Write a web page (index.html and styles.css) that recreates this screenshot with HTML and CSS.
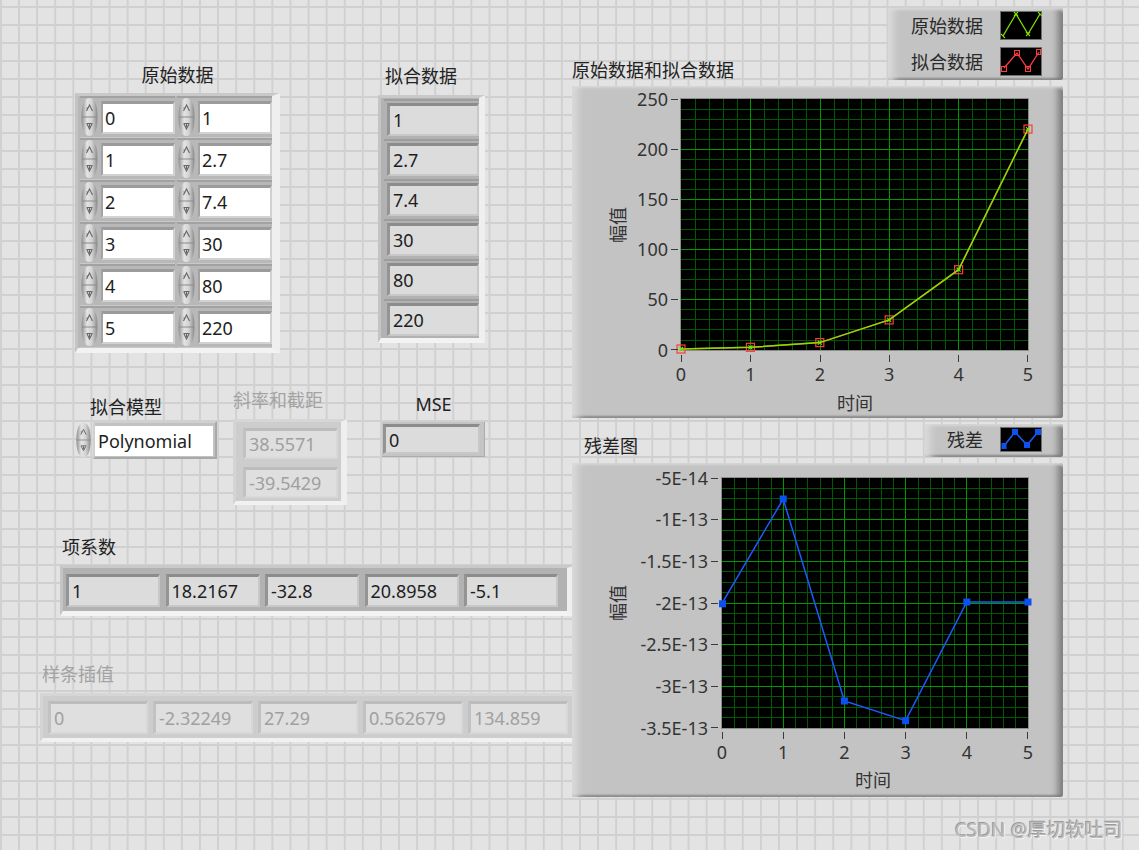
FILE: index.html
```html
<!DOCTYPE html>
<html lang="zh-CN">
<head>
<meta charset="utf-8">
<title>多项式拟合 前面板</title>
<link rel="stylesheet" href="styles.css">
</head>
<body>
<svg class="defs" width="0" height="0" aria-hidden="true">
  <defs>
    <linearGradient id="spin-grad" x1="0" y1="0" x2="1" y2="0">
      <stop offset="0" stop-color="#8f8f8f"/>
      <stop offset="0.35" stop-color="#e4e4e4"/>
      <stop offset="0.65" stop-color="#d2d2d2"/>
      <stop offset="1" stop-color="#8a8a8a"/>
    </linearGradient>
    <symbol id="spin" viewBox="0 0 19 40">
      <path d="M1.5 20 C1.5 7 4.5 1 9.5 1 C14.5 1 17.5 7 17.5 20 Z" fill="url(#spin-grad)"/>
      <path d="M1.5 20 C1.5 33 4.5 39 9.5 39 C14.5 39 17.5 33 17.5 20 Z" fill="url(#spin-grad)"/>
      <path d="M2 20 H17" stroke="#8a8a8a" stroke-width="1"/>
      <path d="M6.5 14 L9.5 8 L12.5 14 M8 11 H6.5" stroke="#666" stroke-width="1.1" fill="none"/>
      <path d="M6.5 26.5 H12.5 M7 27 L9.5 32 L12 27 M9.5 27 V30" stroke="#666" stroke-width="1.1" fill="none"/>
    </symbol>
  </defs>
</svg>

<main class="panel">

  <section class="ctl raw">
    <h2 class="lbl lbl-c">原始数据</h2>
    <div class="arr arr-raw">
      <div class="num"><svg class="spin"><use href="#spin"/></svg><span class="in">0</span></div>
      <div class="num"><svg class="spin"><use href="#spin"/></svg><span class="in">1</span></div>
      <div class="num"><svg class="spin"><use href="#spin"/></svg><span class="in">1</span></div>
      <div class="num"><svg class="spin"><use href="#spin"/></svg><span class="in">2.7</span></div>
      <div class="num"><svg class="spin"><use href="#spin"/></svg><span class="in">2</span></div>
      <div class="num"><svg class="spin"><use href="#spin"/></svg><span class="in">7.4</span></div>
      <div class="num"><svg class="spin"><use href="#spin"/></svg><span class="in">3</span></div>
      <div class="num"><svg class="spin"><use href="#spin"/></svg><span class="in">30</span></div>
      <div class="num"><svg class="spin"><use href="#spin"/></svg><span class="in">4</span></div>
      <div class="num"><svg class="spin"><use href="#spin"/></svg><span class="in">80</span></div>
      <div class="num"><svg class="spin"><use href="#spin"/></svg><span class="in">5</span></div>
      <div class="num"><svg class="spin"><use href="#spin"/></svg><span class="in">220</span></div>
    </div>
  </section>

  <section class="ctl fit">
    <h2 class="lbl">拟合数据</h2>
    <div class="arr arr-fit">
      <div class="el"><span class="ind">1</span></div>
      <div class="el"><span class="ind">2.7</span></div>
      <div class="el"><span class="ind">7.4</span></div>
      <div class="el"><span class="ind">30</span></div>
      <div class="el"><span class="ind">80</span></div>
      <div class="el"><span class="ind">220</span></div>
    </div>
  </section>

  <section class="ctl model">
    <h2 class="lbl">拟合模型</h2>
    <div class="ring">
      <svg class="spin"><use href="#spin"/></svg>
      <div class="ring-box"><div class="ring-val">Polynomial</div></div>
    </div>
  </section>

  <section class="ctl slope dis">
    <h2 class="lbl lbl-dis">斜率和截距</h2>
    <div class="arr arr-slope">
      <span class="ind">38.5571</span>
      <span class="ind">-39.5429</span>
    </div>
  </section>

  <section class="ctl mse">
    <h2 class="lbl lbl-c">MSE</h2>
    <div class="ind-frame"><span class="ind">0</span></div>
  </section>

  <section class="ctl coef">
    <h2 class="lbl">项系数</h2>
    <div class="arr arr-h arr-coef">
      <span class="ind">1</span>
      <span class="ind">18.2167</span>
      <span class="ind">-32.8</span>
      <span class="ind">20.8958</span>
      <span class="ind">-5.1</span>
    </div>
  </section>

  <section class="ctl spline dis">
    <h2 class="lbl lbl-dis">样条插值</h2>
    <div class="arr arr-h arr-spline">
      <span class="ind">0</span>
      <span class="ind">-2.32249</span>
      <span class="ind">27.29</span>
      <span class="ind">0.562679</span>
      <span class="ind">134.859</span>
    </div>
  </section>

  <section class="ctl g1">
    <h2 class="lbl">原始数据和拟合数据</h2>
    <div class="frame gframe">
      <svg class="plot" width="491" height="332" viewBox="0 0 491 332">
        <rect x="109" y="13" width="347" height="251" fill="#000"/>
        <path class="minor" d="M123.5 13V264M137.5 13V264M151.5 13V264M165.5 13V264M192.5 13V264M206.5 13V264M220.5 13V264M234.5 13V264M262.5 13V264M276.5 13V264M289.5 13V264M303.5 13V264M331.5 13V264M345.5 13V264M359.5 13V264M373.5 13V264M400.5 13V264M414.5 13V264M428.5 13V264M442.5 13V264M109 254.5H456M109 243.5H456M109 233.5H456M109 223.5H456M109 203.5H456M109 193.5H456M109 183.5H456M109 173.5H456M109 153.5H456M109 143.5H456M109 133.5H456M109 123.5H456M109 103.5H456M109 93.5H456M109 83.5H456M109 73.5H456M109 53.5H456M109 43.5H456M109 33.5H456M109 23.5H456"/>
        <path class="major" d="M178.5 13V264M248.5 13V264M317.5 13V264M386.5 13V264M109 213.5H456M109 163.5H456M109 113.5H456M109 63.5H456"/>
        <rect class="pborder" x="108.5" y="12.5" width="348" height="252"/>
        <polyline class="fitline" points="109,263 178.4,261.3 247.8,256.6 317.2,233.9 386.6,183.7 456,43.1"/>
        <g class="fitmk">
          <rect x="105" y="259" width="8" height="8"/>
          <rect x="174.4" y="257.3" width="8" height="8"/>
          <rect x="243.8" y="252.6" width="8" height="8"/>
          <rect x="313.2" y="229.9" width="8" height="8"/>
          <rect x="382.6" y="179.7" width="8" height="8"/>
          <rect x="452" y="39.1" width="8" height="8"/>
        </g>
        <polyline class="rawline" points="109,263 178.4,261.3 247.8,256.6 317.2,233.9 386.6,183.7 456,43.1"/>
        <path class="rawmk" d="M107 261l4 4m0-4l-4 4M176.4 259.3l4 4m0-4l-4 4M245.8 254.6l4 4m0-4l-4 4M315.2 231.9l4 4m0-4l-4 4M384.6 181.7l4 4m0-4l-4 4M454 41.1l4 4m0-4l-4 4"/>
        <path class="tick" d="M99 263.5H106M99 213.5H106M99 163.5H106M99 113.5H106M99 63.5H106M99 13.5H106M109.5 269V276M178.5 269V276M248.5 269V276M317.5 269V276M386.5 269V276M455.5 269V276"/>
        <g class="axis ya">
          <text x="96" y="270.5">0</text>
          <text x="96" y="220.3">50</text>
          <text x="96" y="170.1">100</text>
          <text x="96" y="119.9">150</text>
          <text x="96" y="69.7">200</text>
          <text x="96" y="19.5">250</text>
        </g>
        <g class="axis xa">
          <text x="109" y="294.5">0</text>
          <text x="178.4" y="294.5">1</text>
          <text x="247.8" y="294.5">2</text>
          <text x="317.2" y="294.5">3</text>
          <text x="386.6" y="294.5">4</text>
          <text x="456" y="294.5">5</text>
          <text x="283" y="324">时间</text>
          <text transform="translate(46 139) rotate(-90)" y="6.8">幅值</text>
        </g>
      </svg>
    </div>
  </section>

  <aside class="ctl frame legend leg1">
    <div class="leg-row">
      <span>原始数据</span>
      <svg class="swatch" viewBox="0 0 42 29">
        <rect x="0.5" y="0.5" width="41" height="28" fill="#000" stroke="#6e6e6e"/>
        <polyline points="3,25 16,3 28,23 40,3" fill="none" stroke="#7fdc00" stroke-width="1.3"/>
        <path d="M14 1l4 4m0-4l-4 4M26 21l4 4m0-4l-4 4M1 23l4 4M38 1l4 4" stroke="#7fdc00" stroke-width="1.1"/>
      </svg>
    </div>
    <div class="leg-row">
      <span>拟合数据</span>
      <svg class="swatch" viewBox="0 0 42 29">
        <rect x="0.5" y="0.5" width="41" height="28" fill="#000" stroke="#6e6e6e"/>
        <polyline points="4,21 17,6 28,22 39,5" fill="none" stroke="#ff3b3b" stroke-width="1.3"/>
        <g fill="none" stroke="#ff3b3b" stroke-width="1">
          <rect x="1.5" y="19.5" width="5" height="5"/>
          <rect x="14.5" y="3.5" width="5" height="5"/>
          <rect x="25.5" y="19.5" width="5" height="5"/>
          <rect x="36.5" y="2.5" width="4" height="5"/>
        </g>
      </svg>
    </div>
  </aside>

  <section class="ctl g2">
    <h2 class="lbl">残差图</h2>
    <div class="frame gframe">
      <svg class="plot" width="491" height="334" viewBox="0 0 491 334">
        <rect x="150" y="15" width="306" height="250" fill="#000"/>
        <path class="minor" d="M162.5 15V265M174.5 15V265M186.5 15V265M199.5 15V265M223.5 15V265M235.5 15V265M248.5 15V265M260.5 15V265M284.5 15V265M297.5 15V265M309.5 15V265M321.5 15V265M346.5 15V265M358.5 15V265M370.5 15V265M382.5 15V265M407.5 15V265M419.5 15V265M431.5 15V265M443.5 15V265M150 25.5H456M150 35.5H456M150 46.5H456M150 67.5H456M150 77.5H456M150 87.5H456M150 108.5H456M150 119.5H456M150 129.5H456M150 150.5H456M150 160.5H456M150 171.5H456M150 192.5H456M150 202.5H456M150 213.5H456M150 233.5H456M150 244.5H456M150 254.5H456"/>
        <path class="major" d="M211.5 15V265M272.5 15V265M333.5 15V265M394.5 15V265M150 56.5H456M150 98.5H456M150 140.5H456M150 181.5H456M150 223.5H456"/>
        <rect class="pborder" x="149.5" y="14.5" width="307" height="251"/>
        <polyline class="resline" points="150,140.3 211.2,36 272.4,238 333.6,257.7 394.8,139 456,139"/>
        <g class="resmk">
          <rect x="147" y="137.3" width="7" height="7"/>
          <rect x="207.7" y="32.5" width="7" height="7"/>
          <rect x="268.9" y="234.5" width="7" height="7"/>
          <rect x="330.1" y="254.2" width="7" height="7"/>
          <rect x="391.3" y="135.5" width="7" height="7"/>
          <rect x="452.5" y="135.5" width="7" height="7"/>
        </g>
        <path class="tick" d="M139 15.5H146M139 56.5H146M139 98.5H146M139 140.5H146M139 181.5H146M139 223.5H146M139 264.5H146M150.5 269V276M211.5 269V276M272.5 269V276M333.5 269V276M394.5 269V276M455.5 269V276"/>
        <g class="axis ya">
          <text x="136" y="21.5">-5E-14</text>
          <text x="136" y="63.2">-1E-13</text>
          <text x="136" y="104.8">-1.5E-13</text>
          <text x="136" y="146.5">-2E-13</text>
          <text x="136" y="188.2">-2.5E-13</text>
          <text x="136" y="229.8">-3E-13</text>
          <text x="136" y="271.5">-3.5E-13</text>
        </g>
        <g class="axis xa">
          <text x="150" y="295.5">0</text>
          <text x="211.2" y="295.5">1</text>
          <text x="272.4" y="295.5">2</text>
          <text x="333.6" y="295.5">3</text>
          <text x="394.8" y="295.5">4</text>
          <text x="456" y="295.5">5</text>
          <text x="301" y="324">时间</text>
          <text transform="translate(46 140) rotate(-90)" y="6.8">幅值</text>
        </g>
      </svg>
    </div>
  </section>

  <aside class="ctl frame legend leg2">
    <div class="leg-row">
      <span>残差</span>
      <svg class="swatch sw-sm" viewBox="0 0 42 25">
        <rect x="0.5" y="0.5" width="41" height="24" fill="#000" stroke="#6e6e6e"/>
        <polyline points="4,19 15,5 27,18 38,5" fill="none" stroke="#1a5cff" stroke-width="1.5"/>
        <g fill="#0d52f0">
          <rect x="1.5" y="16" width="5" height="6"/>
          <rect x="12" y="2" width="6" height="6"/>
          <rect x="24" y="15" width="6" height="6"/>
          <rect x="35" y="2" width="6" height="6"/>
        </g>
      </svg>
    </div>
  </aside>

  <div class="wm">CSDN @厚切软吐司</div>
</main>
</body>
</html>
```

FILE: styles.css
```css
* { box-sizing: border-box; }
html, body { margin: 0; padding: 0; }
body {
  width: 1139px;
  height: 850px;
  overflow: hidden;
  background-color: #e3e3e3;
  background-image:
    linear-gradient(to right, #d0d0d0 2px, transparent 2px),
    linear-gradient(to bottom, #d0d0d0 2px, transparent 2px);
  background-size: 18.1px 18px;
  background-position: 0 6px;
  font-family: "Noto Sans", "Noto Sans CJK SC", sans-serif;
  color: #1e1e1e;
}
.defs { position: absolute; width: 0; height: 0; }
.panel { position: relative; width: 1139px; height: 850px; }
.ctl { position: absolute; }

.lbl {
  margin: 0;
  font-size: 18px;
  font-weight: 400;
  line-height: 24px;
  height: 24px;
  white-space: nowrap;
  color: #222;
}
.lbl-c { text-align: center; }
.lbl-dis { color: #a3a3a3; }

/* arrays */
.arr {
  border-style: solid;
  border-color: #c9c9c9 #efefef #f3f3f3 #c4c4c4;
  background: #b8b8b8;
}
.spin { width: 19px; height: 40px; flex: none; display: block; }

.raw { left: 75px; top: 63px; width: 205px; }
.arr-raw {
  margin-top: 6px;
  height: 260px;
  border-width: 3px 8px 5px 3px;
  padding-left: 2px;
  display: grid;
  grid-template-columns: 95px 95px;
  column-gap: 2px;
  grid-auto-rows: 42px;
}
.num {
  display: flex;
  align-items: center;
  gap: 2px;
  box-shadow: inset 0 2px 0 #a2a2a2, inset 0 -1px 0 #c9c9c9;
}
.in {
  width: 74px;
  height: 33px;
  background: #fff;
  border-style: solid;
  border-width: 3px 2px 2px 2px;
  border-color: #9b9b9b #d2d2d2 #d2d2d2 #a3a3a3;
  font-size: 18px;
  line-height: 28px;
  padding-left: 2px;
}

.ind {
  display: block;
  background: #dcdcdc;
  border-style: solid;
  border-width: 3px 2px 2px 3px;
  border-color: #8c8c8c #c8c8c8 #c8c8c8 #949494;
  font-size: 18px;
  padding-left: 3px;
  color: #1e1e1e;
  white-space: nowrap;
  overflow: hidden;
}

.fit { left: 378px; top: 64px; width: 107px; }
.fit .lbl { padding-left: 7px; }
.arr-fit {
  margin-top: 7px;
  height: 248px;
  border-width: 3px 6px 5px 3px;
  padding: 1px 0 0 3px;
  display: grid;
  grid-auto-rows: 40px;
  background: #b2b2b2;
}
.el {
  display: flex;
  align-items: center;
  padding-left: 3px;
  box-shadow: inset 0 2px 0 #9d9d9d;
}
.arr-fit .ind { width: 92px; height: 33px; line-height: 28px; }

/* ring */
.model { left: 75px; top: 395px; }
.model .lbl { padding-left: 15px; }
.ring { display: flex; align-items: center; margin-top: 1px; }
.ring .spin { width: 17px; height: 40px; }
.ring-box {
  margin-left: 1px;
  width: 124px;
  height: 38px;
  background: #c2c2c2;
  border: 2px solid;
  border-color: #d0d0d0 #a9a9a9 #a9a9a9 #d0d0d0;
  padding: 3px 2px 1px 0;
}
.ring-val {
  height: 100%;
  background: #fff;
  font-size: 18px;
  line-height: 30px;
  padding-left: 3px;
}

/* disabled */
.dis .arr {
  background: #cdcdcd;
  border-color: #d6d6d6 #efefef #f1f1f1 #d4d4d4;
}
.dis .ind {
  background: #dfdfdf;
  border-color: #bcbcbc #d8d8d8 #d8d8d8 #c2c2c2;
  color: #a0a0a0;
}

.slope { left: 233px; top: 388px; }
.arr-slope {
  margin-top: 7px;
  width: 114px;
  height: 86px;
  border-width: 3px 6px 4px 3px;
  padding: 6px 0 0 7px;
  display: grid;
  grid-template-columns: 95px;
  grid-template-rows: 31px 31px;
  row-gap: 8px;
}
.arr-slope .ind { line-height: 26px; }

.mse { left: 382px; top: 392px; width: 103px; }
.ind-frame {
  margin-top: 6px;
  height: 35px;
  background: #c4c4c4;
  padding: 2px 4px 2px 1px;
  border-right: 1px solid #ababab;
  border-bottom: 1px solid #ababab;
}
.ind-frame .ind { height: 100%; line-height: 26px; }

.coef { left: 60px; top: 535px; }
.coef .lbl { padding-left: 2px; }
.arr-h { margin-top: 6px; display: grid; }
.arr-coef {
  width: 517px;
  height: 51px;
  border-width: 3px 10px 5px 3px;
  padding: 6px 0 0 3px;
  grid-template-columns: repeat(5, 94px);
  column-gap: 5.5px;
  background: #b2b2b2;
}
.arr-coef .ind { height: 33px; line-height: 28px; }

.spline { left: 40px; top: 662px; }
.spline .lbl { padding-left: 2px; }
.arr-spline {
  margin-top: 7px;
  width: 538px;
  height: 49px;
  border-width: 3px 5px 4px 3px;
  padding: 5px 0 0 5px;
  grid-template-columns: repeat(5, 100px);
  column-gap: 5px;
}
.arr-spline .ind { height: 33px; line-height: 28px; }

/* graph frames */
.frame {
  background: #c3c3c3;
  border-radius: 3px;
  box-shadow:
    inset 12px 0 9px -7px #dcdcdc,
    inset 0 4px 3px -2px #d8d8d8,
    inset -10px 0 7px -5px #7a7a7a,
    inset 0 -3px 2px -1px #8a8a8a;
}
.g1 { left: 572px; top: 58px; }
.gframe { margin-top: 4px; width: 491px; height: 332px; }
.g2 { left: 572px; top: 434px; }
.g2 .lbl { padding-left: 12px; }
.g2 .gframe { margin-top: 5px; height: 334px; }
.plot { display: block; }
.plot .minor { stroke: #005800; stroke-width: 1; fill: none; }
.plot .major { stroke: #009a00; stroke-width: 1; fill: none; }
.plot .pborder { fill: none; stroke: #8c8c8c; stroke-width: 1; }
.plot .tick { stroke: #3a3a3a; stroke-width: 1; fill: none; }
.plot .fitline { fill: none; stroke: #ff3030; stroke-width: 1.5; }
.plot .fitmk rect { fill: none; stroke: #ff3a3a; stroke-width: 1.2; }
.plot .rawline { fill: none; stroke: #80e000; stroke-width: 1.5; }
.plot .rawmk { stroke: #80e000; stroke-width: 1.2; fill: none; }
.plot .resline { fill: none; stroke: #1a5cff; stroke-width: 1.5; }
.plot .resmk rect { fill: #0b50f0; }
.axis text {
  font-family: "Noto Sans", "Noto Sans CJK SC", sans-serif;
  font-size: 18px;
  fill: #333;
}
.ya text { text-anchor: end; }
.xa text { text-anchor: middle; }

/* legends */
.legend {
  display: flex;
  flex-direction: column;
  align-items: flex-end;
  padding: 3px 21px 0 0;
}
.leg1 { left: 888px; top: 8px; width: 175px; height: 72px; row-gap: 7px; }
.leg2 { left: 925px; top: 424px; width: 138px; height: 33px; }
.leg-row {
  display: flex;
  align-items: center;
  gap: 17px;
  font-size: 18px;
  line-height: 24px;
  color: #2a2a2a;
}
.swatch { width: 42px; height: 29px; display: block; }
.sw-sm { height: 25px; }

.wm {
  position: absolute;
  left: 955px;
  top: 817px;
  font-size: 19px;
  line-height: 26px;
  color: #bcbcbc;
  text-shadow: -1px -1px 0 #9a9a9a, 1px 1px 0 #f2f2f2;
  white-space: nowrap;
}
```
